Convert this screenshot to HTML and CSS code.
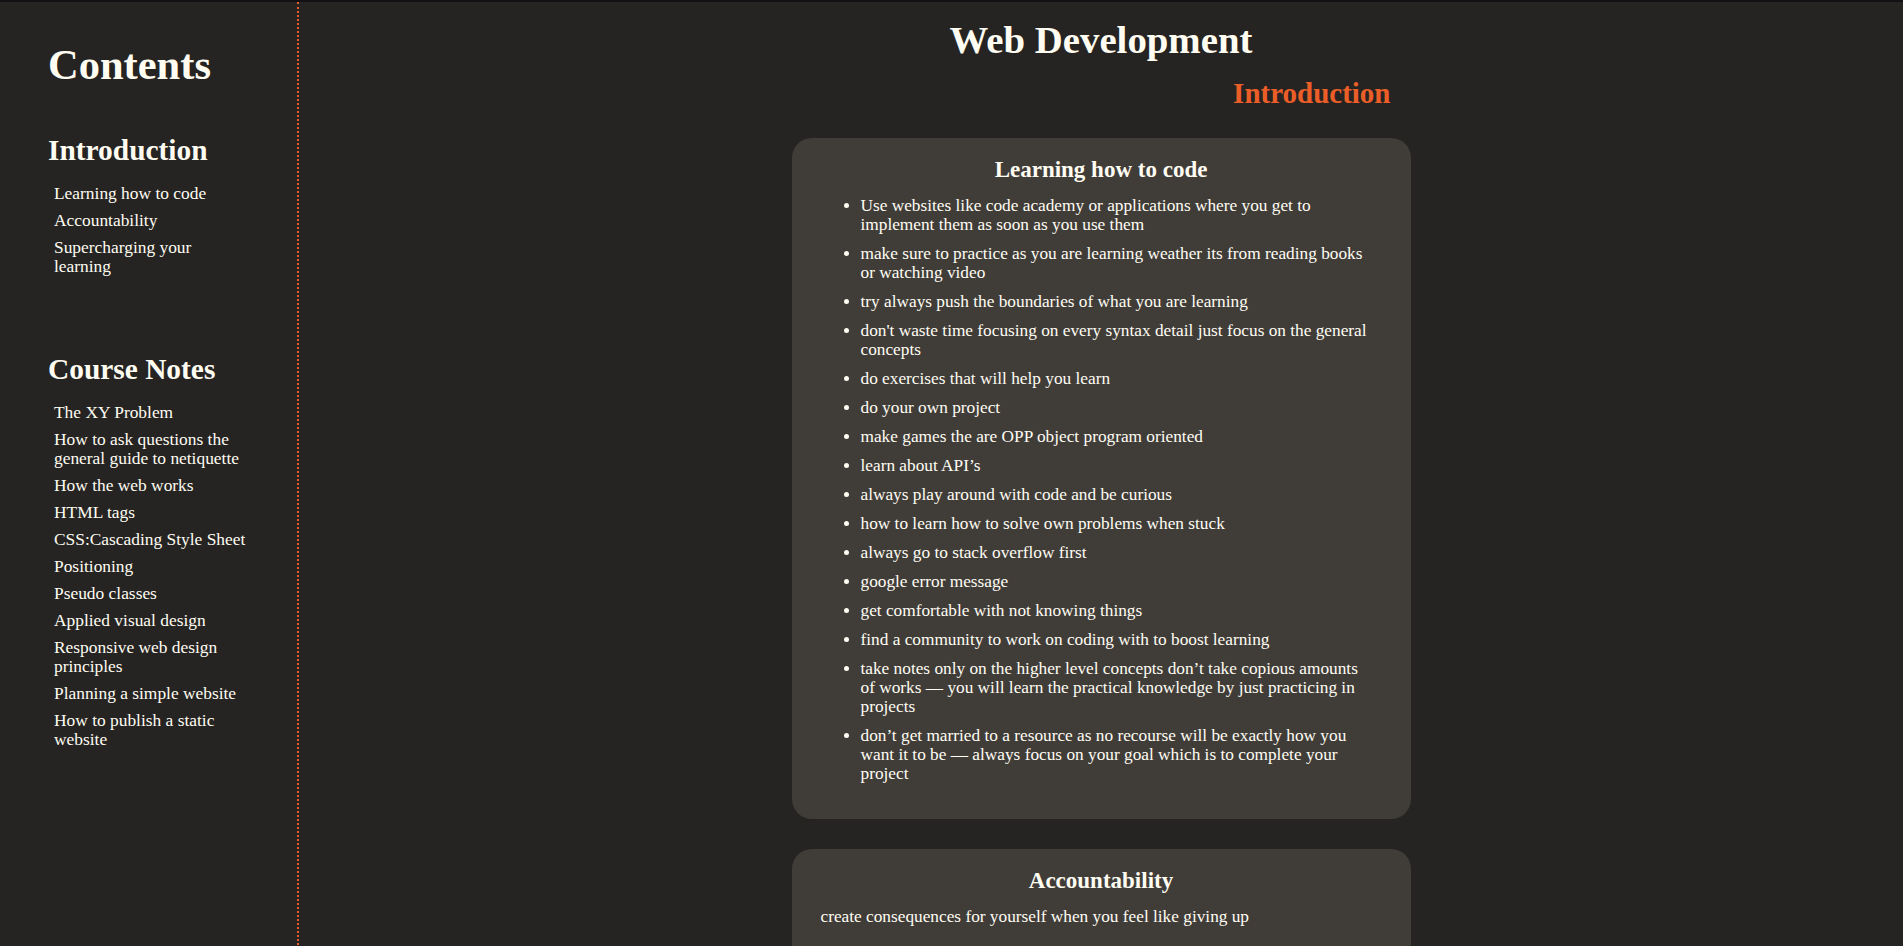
FILE: index.html
```html
<!DOCTYPE html>
<html lang="en">
<head>
<meta charset="utf-8">
<title>Web Development Notes</title>
<link rel="stylesheet" href="styles.css">
</head>
<body>
<nav class="sidebar">
  <h1 class="sidebar-title">Contents</h1>
  <section class="nav-group">
    <h2 class="nav-heading">Introduction</h2>
    <ul class="nav-list">
      <li><a href="#learning">Learning how to code</a></li>
      <li><a href="#accountability">Accountability</a></li>
      <li><a href="#supercharging">Supercharging your learning</a></li>
    </ul>
  </section>
  <section class="nav-group">
    <h2 class="nav-heading">Course Notes</h2>
    <ul class="nav-list">
      <li><a href="#">The XY Problem</a></li>
      <li><a href="#">How to ask questions the general guide to netiquette</a></li>
      <li><a href="#">How the web works</a></li>
      <li><a href="#">HTML tags</a></li>
      <li><a href="#">CSS:Cascading Style Sheet</a></li>
      <li><a href="#">Positioning</a></li>
      <li><a href="#">Pseudo classes</a></li>
      <li><a href="#">Applied visual design</a></li>
      <li><a href="#">Responsive web design principles</a></li>
      <li><a href="#">Planning a simple website</a></li>
      <li><a href="#">How to publish a static website</a></li>
    </ul>
  </section>
</nav>

<main class="main">
  <h1 class="page-title">Web Development</h1>
  <div class="content">
    <h2 class="section-title">Introduction</h2>

    <article class="card" id="learning">
      <h3 class="card-title">Learning how to code</h3>
      <ul class="card-list">
        <li>Use websites like code academy or applications where you get to implement them as soon as you use them</li>
        <li>make sure to practice as you are learning weather its from reading books or watching video</li>
        <li>try always push the boundaries of what you are learning</li>
        <li>don't waste time focusing on every syntax detail just focus on the general concepts</li>
        <li>do exercises that will help you learn</li>
        <li>do your own project</li>
        <li>make games the are OPP object program oriented</li>
        <li>learn about API’s</li>
        <li>always play around with code and be curious</li>
        <li>how to learn how to solve own problems when stuck</li>
        <li>always go to stack overflow first</li>
        <li>google error message</li>
        <li>get comfortable with not knowing things</li>
        <li>find a community to work on coding with to boost learning</li>
        <li>take notes only on the higher level concepts don’t take copious amounts of works — you will learn the practical knowledge by just practicing in projects</li>
        <li>don’t get married to a resource as no recourse will be exactly how you want it to be — always focus on your goal which is to complete your project</li>
      </ul>
    </article>

    <article class="card" id="accountability">
      <h3 class="card-title">Accountability</h3>
      <p class="card-text">create consequences for yourself when you feel like giving up</p>
    </article>

    <article class="card" id="supercharging">
      <h3 class="card-title">Supercharging your learning</h3>
      <p class="card-text">study in short focused sessions and review what you learned the next day</p>
    </article>
  </div>
</main>
</body>
</html>
```

FILE: styles.css
```css
* {
  box-sizing: border-box;
}

html {
  background: #252422;
}

body {
  margin: 0;
  min-height: 100vh;
  display: flex;
  align-items: stretch;
  background: #252422;
  border-top: 2px solid #121214;
  color: #fffcf2;
  font-family: Georgia, "Liberation Serif", serif;
}

/* ---------- sidebar ---------- */
.sidebar {
  flex: 0 0 299px;
  width: 299px;
  padding: 39px 50px 0 48px;
  border-right: 2px dotted #eb5e28;
}

.sidebar-title {
  margin: 0 0 45px;
  font-size: 42.5px;
  line-height: 48px;
  font-weight: bold;
}

.nav-group {
  margin-bottom: 77px;
}

.nav-heading {
  margin: 0;
  font-size: 29.4px;
  line-height: 33px;
  font-weight: bold;
}

.nav-list {
  list-style: none;
  margin: 17px 0 0;
  padding: 0 0 0 6px;
}

.nav-list li {
  font-size: 17.4px;
  line-height: 19px;
}

.nav-list li + li {
  margin-top: 8px;
}

.nav-list a {
  color: #fffcf2;
  text-decoration: none;
}

/* ---------- main ---------- */
.main {
  flex: 1 1 auto;
  min-width: 0;
}

.page-title {
  margin: 16px 0 0;
  text-align: center;
  font-size: 38.8px;
  line-height: 44px;
  font-weight: bold;
}

.content {
  width: 619px;
  margin: 0 auto;
  padding-bottom: 40px;
}

.section-title {
  margin: 15px 0 28px;
  padding-right: 20px;
  text-align: right;
  color: #eb5e28;
  font-size: 29px;
  line-height: 33px;
  font-weight: bold;
}

.card {
  width: 100%;
  background: #403d39;
  border-radius: 20px;
  padding: 19px 29px 20px;
}

.card + .card {
  margin-top: 30px;
}

.card-title {
  margin: 0;
  text-align: center;
  font-size: 23px;
  line-height: 26px;
  font-weight: bold;
}

.card-list {
  margin: 13px 7px 16px 0;
  padding-left: 40px;
}

.card-list li,
.card-text {
  font-size: 17.3px;
  line-height: 19px;
}

.card-list li + li {
  margin-top: 10px;
}

.card-text {
  margin: 13px 0 40px;
}
```
